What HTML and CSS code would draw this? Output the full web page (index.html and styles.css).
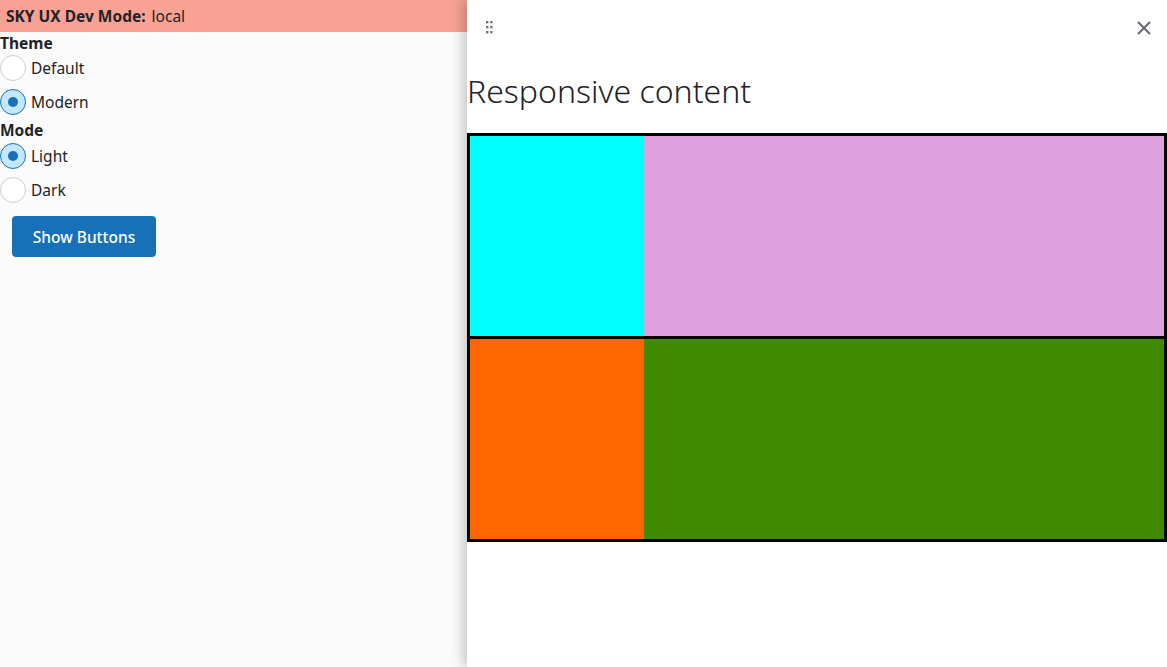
FILE: index.html
```html
<!DOCTYPE html>
<html>
<head>
<meta charset="utf-8">
<link rel="stylesheet" href="styles.css">
</head>
<body>
<div class="page">
  <div class="devbar"><b>SKY UX Dev Mode:</b> local</div>
  <div class="settings">
    <div class="group-label">Theme</div>
    <label class="radio first"><span class="circle"></span><span>Default</span></label>
    <label class="radio"><span class="circle on"></span><span>Modern</span></label>
    <div class="group-label">Mode</div>
    <label class="radio second"><span class="circle on"></span><span>Light</span></label>
    <label class="radio"><span class="circle"></span><span>Dark</span></label>
    <button class="btn">Show Buttons</button>
  </div>
</div>
<aside class="flyout">
  <div class="flyout-head">
    <svg class="grip" width="10" height="16" viewBox="0 0 10 16">
      <rect x="0" y="1" width="2.4" height="2.4"/><rect x="4.2" y="1" width="2.4" height="2.4"/>
      <rect x="0" y="6" width="2.4" height="2.4"/><rect x="4.2" y="6" width="2.4" height="2.4"/>
      <rect x="0" y="11" width="2.4" height="2.4"/><rect x="4.2" y="11" width="2.4" height="2.4"/>
    </svg>
    <svg class="close" width="16" height="16" viewBox="0 0 16 16">
      <path d="M2 2 L14 14 M14 2 L2 14"/>
    </svg>
  </div>
  <h1 class="title">Responsive content</h1>
  <div class="grid">
    <div class="row">
      <div class="cell c-cyan"></div>
      <div class="cell c-pink"></div>
    </div>
    <div class="row">
      <div class="cell c-orange"></div>
      <div class="cell c-green"></div>
    </div>
  </div>
</aside>
</body>
</html>
```
FILE: styles.css
```css
html, body {
  margin: 0;
  padding: 0;
  height: 100%;
}
body {
  background: #fbfbfb;
  font-family: "Noto Sans", "Open Sans", sans-serif;
  color: #212327;
  font-size: 15.5px;
  overflow: hidden;
  position: relative;
}
.page {
  width: 100%;
}
.devbar {
  background: #f8a194;
  height: 32px;
  line-height: 32px;
  padding-left: 6px;
  font-size: 15.5px;
  color: #212327;
}
.devbar b {
  font-weight: 700;
  margin-right: 2px;
}
.settings {
  display: flex;
  flex-direction: column;
  align-items: flex-start;
}
.group-label {
  font-weight: 700;
  font-size: 15.5px;
  line-height: 20px;
  margin-top: 1px;
}
.radio {
  display: flex;
  align-items: center;
  gap: 5px;
  height: 34px;
  font-size: 15.5px;
}
.radio.first {
  margin-top: -2px;
}
.radio.second {
  margin-top: -1px;
}
.circle {
  width: 26px;
  height: 26px;
  border-radius: 50%;
  border: 1px solid #cdcfd2;
  background: #fff;
  box-sizing: border-box;
  display: flex;
  align-items: center;
  justify-content: center;
}
.circle.on {
  background: #c1e8fb;
  border-color: #1870b8;
}
.circle.on::after {
  content: "";
  width: 10px;
  height: 10px;
  border-radius: 50%;
  background: #1870b8;
}
.btn {
  margin: 9px 0 0 12px;
  width: 144px;
  height: 41px;
  background: #1870b8;
  color: #fff;
  border: none;
  border-radius: 4px;
  font-family: inherit;
  font-size: 15.5px;
  font-weight: 500;
}
.flyout {
  position: absolute;
  top: 0;
  right: 0;
  width: 700px;
  height: 100%;
  background: #fff;
  box-shadow: -4px 0 12px rgba(0,0,0,0.22);
}
.flyout-head {
  display: flex;
  justify-content: space-between;
  align-items: center;
  height: 56px;
  padding: 0 15px 0 19px;
}
.grip {
  fill: #6f737a;
}
.close {
  stroke: #686c73;
  stroke-width: 2.2;
  fill: none;
}
.title {
  margin: 15px 0 22px 0;
  font-size: 32px;
  font-weight: 300;
  line-height: 40px;
  color: #212327;
}
.grid {
  border: 3px solid #000;
}
.row {
  display: grid;
  grid-template-columns: 174px 1fr;
  height: 200px;
}
.row + .row {
  border-top: 3px solid #000;
}
.c-cyan { background: #00ffff; }
.c-pink { background: #dda0dd; }
.c-orange { background: #ff6600; }
.c-green { background: #408a00; }
```
